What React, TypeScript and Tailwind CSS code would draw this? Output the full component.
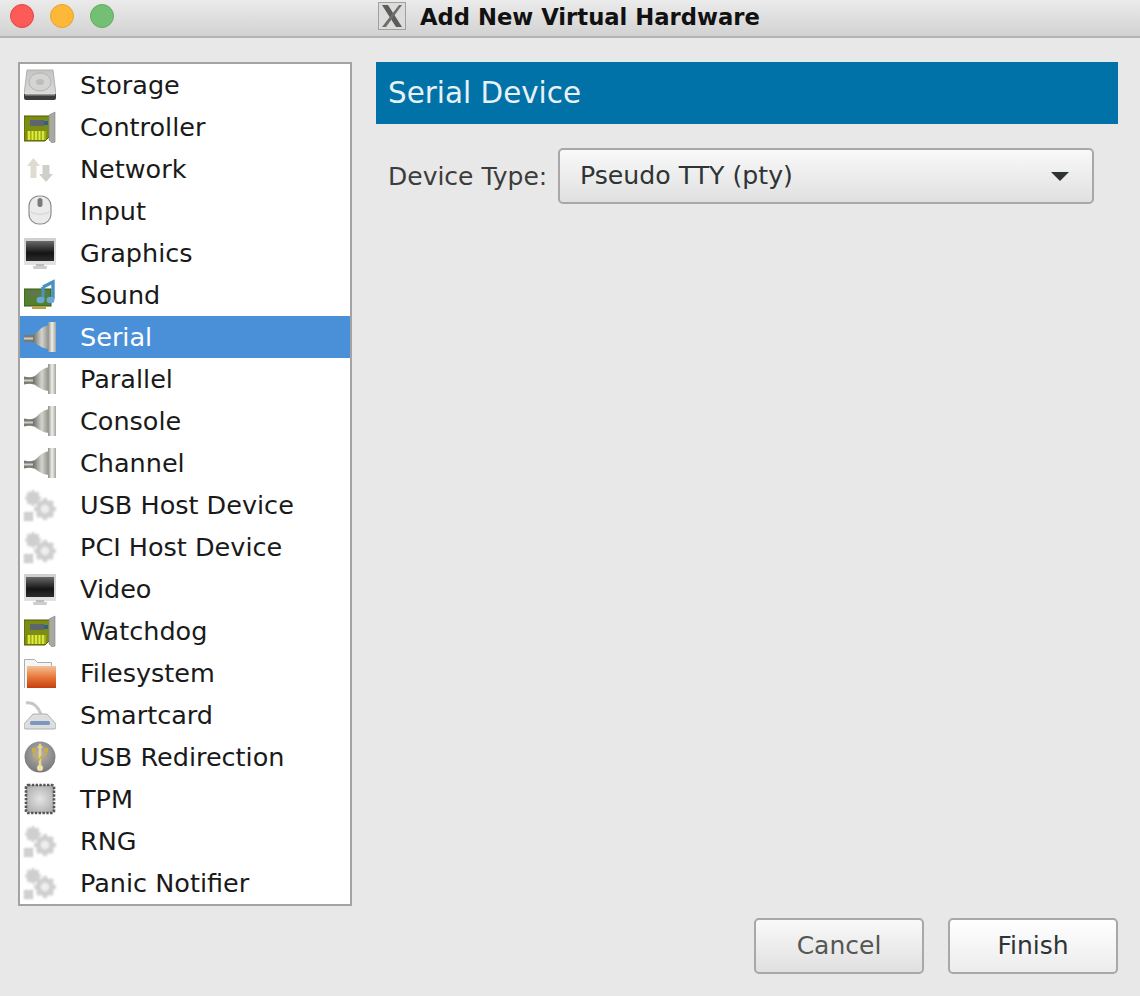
import React from 'react'

// shared gradients for the hardware icons
function IconDefs() {
  return (
    <svg width="0" height="0" className="absolute">
      <defs>
        <linearGradient id="disk" x1="0" y1="0" x2="0" y2="1">
          <stop offset="0" stopColor="#c4c4c2" />
          <stop offset="1" stopColor="#dcdcda" />
        </linearGradient>
        <linearGradient id="screen" x1="0" y1="0" x2="0" y2="1">
          <stop offset="0" stopColor="#6a6a6a" />
          <stop offset="0.6" stopColor="#141414" />
          <stop offset="1" stopColor="#2c2c2c" />
        </linearGradient>
        <linearGradient id="bezel" x1="0" y1="0" x2="0" y2="1">
          <stop offset="0" stopColor="#cfcfcf" />
          <stop offset="1" stopColor="#e2e2e2" />
        </linearGradient>
        <linearGradient id="folder" x1="0" y1="0" x2="0" y2="1">
          <stop offset="0" stopColor="#f5c09a" />
          <stop offset="0.5" stopColor="#e8793a" />
          <stop offset="1" stopColor="#c4400e" />
        </linearGradient>
        <linearGradient id="plug" x1="0" y1="0" x2="1" y2="0">
          <stop offset="0" stopColor="#6f6f68" />
          <stop offset="0.55" stopColor="#d4d4ce" />
          <stop offset="1" stopColor="#8c8c85" />
        </linearGradient>
        <linearGradient id="plate" x1="0" y1="0" x2="1" y2="0">
          <stop offset="0" stopColor="#8d8d86" />
          <stop offset="0.5" stopColor="#f0f0ec" />
          <stop offset="1" stopColor="#a3a39c" />
        </linearGradient>
        <radialGradient id="chip" cx="0.5" cy="0.5" r="0.7">
          <stop offset="0" stopColor="#e4e4e4" />
          <stop offset="1" stopColor="#a5a5a5" />
        </radialGradient>
        <radialGradient id="usb" cx="0.5" cy="0.4" r="0.7">
          <stop offset="0" stopColor="#b5b5b5" />
          <stop offset="1" stopColor="#6f6f6f" />
        </radialGradient>
      </defs>
    </svg>
  )
}

const iconClass = 'w-8 h-8 shrink-0 blur-[0.6px]'

function DiskIcon() {
  return (
    <svg viewBox="0 0 32 32" className={iconClass}>
      <path d="M3 1h26l3 25H0z" fill="url(#disk)" stroke="#b0b0ae" />
      <ellipse cx="16" cy="13" rx="11" ry="9" fill="#d4d4d2" stroke="#b4b4b2" />
      <ellipse cx="16" cy="13" rx="4" ry="3" fill="#bdbdbb" />
      <path d="M0 25h32v4a2 2 0 0 1-2 2H2a2 2 0 0 1-2-2z" fill="#3c3c3c" />
      <rect x="1" y="25" width="30" height="1.5" fill="#9a9a9a" />
    </svg>
  )
}

function CardIcon() {
  return (
    <svg viewBox="0 0 32 32" className={iconClass}>
      <path d="M0 5h26v20l-5 5H0z" fill="#7d8c12" stroke="#4f5a08" />
      <rect x="6" y="9" width="14" height="6" fill="#5c666e" />
      <rect x="20" y="10" width="4" height="4" fill="#2d5f8f" />
      <rect x="3" y="20" width="19" height="9" fill="#9fb018" />
      <path d="M5 20v9M8.5 20v9M12 20v9M15.5 20v9M19 20v9" stroke="#e2ee3e" strokeWidth="1.8" />
      <path d="M25 4l6-3v30l-3 1-3-3z" fill="#a9a9a3" stroke="#85857f" strokeWidth="0.6" />
    </svg>
  )
}

function NetworkIcon() {
  return (
    <svg viewBox="0 0 32 32" className={iconClass}>
      <path d="M9.5 5l6.5 8h-3.5v12h-6V13H3z" fill="#dedcd2" />
      <path d="M22 29l7-8h-3.5V12h-7v9H15z" fill="#cfcfc9" />
    </svg>
  )
}

function MouseIcon() {
  return (
    <svg viewBox="0 0 32 32" className={iconClass}>
      <rect x="5" y="1" width="22" height="28" rx="10" fill="#ebebeb" stroke="#8e8e8e" strokeWidth="1.2" />
      <path d="M7 17c5 3 13 3 18 0" stroke="#cfcfcf" fill="none" />
      <rect x="13.5" y="3" width="5" height="9" rx="2.5" fill="#7a7a7a" />
    </svg>
  )
}

function MonitorIcon() {
  return (
    <svg viewBox="0 0 32 32" className={iconClass}>
      <rect x="0" y="1" width="32" height="27" rx="1" fill="url(#bezel)" />
      <rect x="2" y="4" width="28" height="20" fill="url(#screen)" />
      <rect x="12" y="27" width="8" height="3" fill="#bcbcbc" />
      <rect x="9" y="29" width="14" height="3" rx="1" fill="#cdcdcd" />
    </svg>
  )
}

function SoundIcon() {
  return (
    <svg viewBox="0 0 32 32" className={iconClass}>
      <rect x="0" y="10" width="27" height="17" fill="#55802f" stroke="#34591b" />
      <rect x="4" y="13" width="11" height="4" fill="#66705c" />
      <rect x="8" y="27" width="14" height="3" fill="#b5a64a" />
      <path d="M19 8l10-5v17" stroke="#4a90c4" strokeWidth="3.4" fill="none" />
      <path d="M19 8v12" stroke="#4a90c4" strokeWidth="3.4" />
      <ellipse cx="16.5" cy="21" rx="4" ry="3.2" fill="#6aa8d6" />
      <ellipse cx="26.5" cy="21" rx="4" ry="3.2" fill="#6aa8d6" />
    </svg>
  )
}

function PlugIcon() {
  return (
    <svg viewBox="0 0 32 32" className={iconClass}>
      <path d="M0 13.5c4 1 7 1 10 0v8c-3-1-6-1-10 0z" fill="#7b7b74" />
      <path d="M0 16.5h9v2H0z" fill="#cfcfc9" />
      <path d="M9 14c4-1 6-8 16-10v24C15 27 13 22 9 21z" fill="url(#plug)" />
      <rect x="24" y="1" width="8" height="30" fill="url(#plate)" />
    </svg>
  )
}

function Gear({ cx, cy, r, hole }: { cx: number; cy: number; r: number; hole?: boolean }) {
  const teeth = [0, 45, 90, 135, 180, 225, 270, 315]
  return (
    <g>
      {teeth.map((a) => (
        <rect
          key={a}
          x={cx - r * 0.2}
          y={cy - r * 1.05}
          width={r * 0.4}
          height={r * 0.4}
          fill="#d2d2d2"
          transform={`rotate(${a} ${cx} ${cy})`}
        />
      ))}
      <circle cx={cx} cy={cy} r={r * 0.88} fill="#cfcfcf" />
      {hole && <circle cx={cx} cy={cy} r={r * 0.42} fill="#eeeeee" />}
    </g>
  )
}

function GearsIcon() {
  return (
    <svg viewBox="0 0 32 32" className="w-8 h-8 shrink-0 blur-[0.9px]">
      <Gear cx={9} cy={9} r={7.5} />
      <Gear cx={21} cy={20} r={10.5} hole />
      <rect x="0" y="23" width="9" height="9" fill="#c2c2c2" />
      <path d="M3 23v9M6 23v9M0 26h9M0 29h9" stroke="#e0e0e0" strokeWidth="0.9" />
    </svg>
  )
}

function FolderIcon() {
  return (
    <svg viewBox="0 0 32 32" className={iconClass}>
      <path d="M0.5 31V2.5h10l3 3h14V12" fill="#f5f5f5" stroke="#adadad" />
      <rect x="3" y="9" width="29" height="22" fill="url(#folder)" />
    </svg>
  )
}

function SmartcardIcon() {
  return (
    <svg viewBox="0 0 32 32" className={iconClass}>
      <path d="M2 4c8-2 12 4 15 11" stroke="#c6c6c6" strokeWidth="3" fill="none" />
      <path d="M9 15h14l9 10v3a2 2 0 0 1-2 2H2a2 2 0 0 1-2-2v-3z" fill="#dedede" stroke="#b0b0b0" />
      <rect x="6" y="22" width="20" height="4" rx="1.5" fill="#7e97bc" />
    </svg>
  )
}

function UsbIcon() {
  return (
    <svg viewBox="0 0 32 32" className={iconClass}>
      <circle cx="16" cy="16" r="15.5" fill="url(#usb)" />
      <path d="M16 4v22" stroke="#ead48c" strokeWidth="2.6" />
      <path d="M16 2l3 5h-6z" fill="#ead48c" />
      <path d="M10 9v6l6 4M22 9v4l-6 4" stroke="#c9ad4a" strokeWidth="2" fill="none" />
      <rect x="8" y="7" width="4" height="4" fill="#c9ad4a" />
      <rect x="20" y="7" width="4" height="4" fill="#c9ad4a" />
      <circle cx="16" cy="27" r="3" fill="#f0e2a8" />
    </svg>
  )
}

function ChipIcon() {
  return (
    <svg viewBox="0 0 32 32" className={iconClass}>
      <rect x="2" y="2" width="28" height="28" rx="2" fill="url(#chip)" stroke="#555555" strokeWidth="2.6" strokeDasharray="2.4 1.4" />
    </svg>
  )
}

function XLogo() {
  return (
    <svg viewBox="0 0 28 28" className="w-7 h-7 shrink-0 blur-[0.5px]">
      <rect x="0.5" y="0.5" width="27" height="27" fill="#dcdcda" stroke="#a0a0a0" />
      <path d="M4 3h6l14 22h-6z" fill="#5c5c5c" />
      <path d="M21 3h3L8 25H4z" fill="#6e6e6e" />
    </svg>
  )
}

const items: { name: string; Icon: () => React.JSX.Element }[] = [
  { name: 'Storage', Icon: DiskIcon },
  { name: 'Controller', Icon: CardIcon },
  { name: 'Network', Icon: NetworkIcon },
  { name: 'Input', Icon: MouseIcon },
  { name: 'Graphics', Icon: MonitorIcon },
  { name: 'Sound', Icon: SoundIcon },
  { name: 'Serial', Icon: PlugIcon },
  { name: 'Parallel', Icon: PlugIcon },
  { name: 'Console', Icon: PlugIcon },
  { name: 'Channel', Icon: PlugIcon },
  { name: 'USB Host Device', Icon: GearsIcon },
  { name: 'PCI Host Device', Icon: GearsIcon },
  { name: 'Video', Icon: MonitorIcon },
  { name: 'Watchdog', Icon: CardIcon },
  { name: 'Filesystem', Icon: FolderIcon },
  { name: 'Smartcard', Icon: SmartcardIcon },
  { name: 'USB Redirection', Icon: UsbIcon },
  { name: 'TPM', Icon: ChipIcon },
  { name: 'RNG', Icon: GearsIcon },
  { name: 'Panic Notifier', Icon: GearsIcon },
]

export default function App() {
  return (
    <div className="w-[1140px] h-[996px] overflow-hidden flex flex-col bg-[#e8e8e8] font-['DejaVu_Sans',sans-serif]">
      <IconDefs />

      {/* Title bar */}
      <div className="h-[38px] shrink-0 flex items-center pb-[4px] pl-[10px] border-b-2 border-[#b4b4b4] bg-gradient-to-b from-[#ebebeb] to-[#d2d2d2]">
        <div className="flex gap-4">
          <div className="w-6 h-6 rounded-full bg-[#fc5b57] border border-[#e5453f]" />
          <div className="w-6 h-6 rounded-full bg-[#fdb83a] border border-[#e8a32e]" />
          <div className="w-6 h-6 rounded-full bg-[#73c074] border border-[#62ab63]" />
        </div>
        <div className="ml-[264px] flex items-center gap-[14px]">
          <XLogo />
          <span className="pt-[3px] text-[22.7px] leading-none font-bold text-[#111111]">
            Add New Virtual Hardware
          </span>
        </div>
      </div>

      <div className="flex-1 flex pt-6 pl-[18px] pb-[22px] pr-[22px] gap-6">
        {/* Hardware list */}
        <div className="w-[334px] h-[844px] border-2 border-[#a3a3a3] bg-white flex flex-col">
          {items.map(({ name, Icon }) => (
            <div
              key={name}
              className={
                name === 'Serial'
                  ? 'h-[42px] shrink-0 flex items-center pl-1 bg-[#4a90d9] text-white'
                  : 'h-[42px] shrink-0 flex items-center pl-1 text-[#1a1a1a]'
              }
            >
              <Icon />
              <span className="ml-6 pt-[2px] text-[25.5px] leading-none">{name}</span>
            </div>
          ))}
        </div>

        {/* Device panel */}
        <div className="flex-1 flex flex-col">
          <div className="h-[62px] flex items-center pl-3 bg-[#0072a8]">
            <span className="pt-[2px] text-[29.4px] leading-none text-[#e8f1f6]">Serial Device</span>
          </div>
          <div className="mt-6 flex items-center pl-3 pr-6">
            <span className="w-[170px] text-[25px] leading-none text-[#3c3c3c]">Device Type:</span>
            <div className="flex-1 h-14 flex items-center justify-between pl-5 pr-[23px] rounded-[5px] border-2 border-[#a8a8a8] bg-gradient-to-b from-[#f9f9f9] to-[#e0e0e0]">
              <span className="text-[25.2px] leading-none text-[#2e3436]">Pseudo TTY (pty)</span>
              <div className="w-0 h-0 border-l-[9px] border-r-[9px] border-t-[9px] border-l-transparent border-r-transparent border-t-[#2e3436]" />
            </div>
          </div>
          <div className="flex-1" />
          <div className="flex justify-end gap-6">
            <button className="w-[170px] h-14 pb-[2px] rounded-[5px] border-2 border-[#a8a8a8] bg-gradient-to-b from-[#f9f9f9] to-[#e0e0e0] text-[25px] leading-none text-[#555753]">
              Cancel
            </button>
            <button className="w-[170px] h-14 pb-[2px] rounded-[5px] border-2 border-[#a8a8a8] bg-gradient-to-b from-[#ffffff] to-[#ececec] text-[25px] leading-none text-[#2e3436]">
              Finish
            </button>
          </div>
        </div>
      </div>
    </div>
  )
}
